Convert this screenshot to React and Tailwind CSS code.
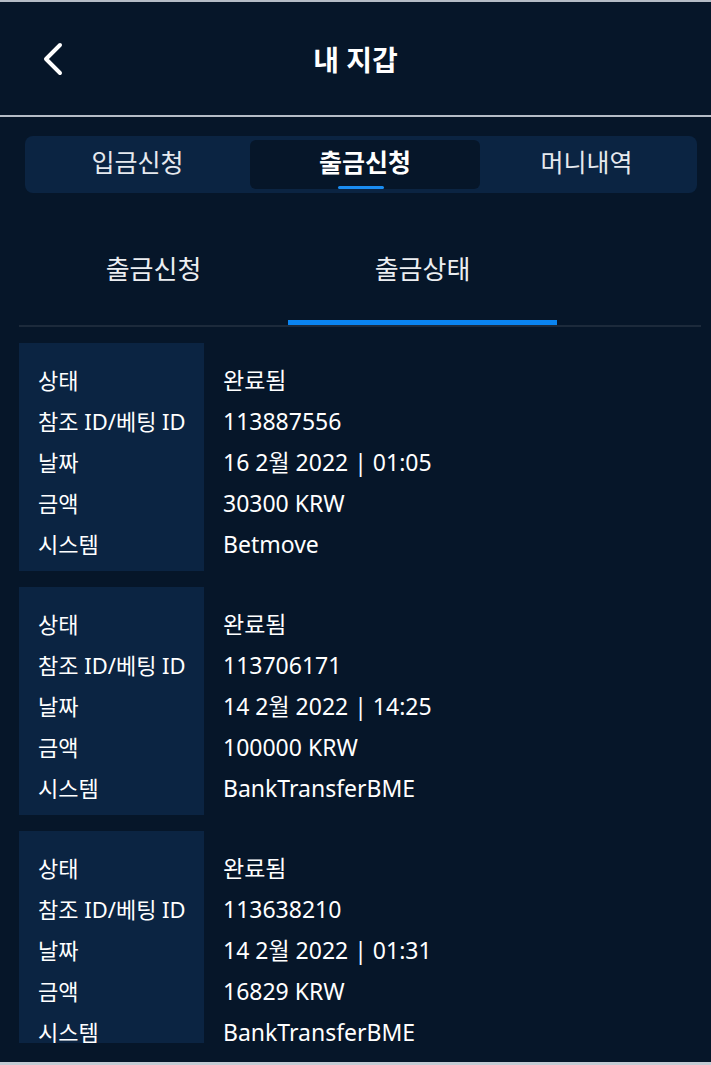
const topTabs = ["입금신청", "출금신청", "머니내역"];

const records = [
    { status: "완료됨", ref: "113887556", date: "16 2월 2022 | 01:05", amount: "30300 KRW", system: "Betmove" },
    { status: "완료됨", ref: "113706171", date: "14 2월 2022 | 14:25", amount: "100000 KRW", system: "BankTransferBME" },
    { status: "완료됨", ref: "113638210", date: "14 2월 2022 | 01:31", amount: "16829 KRW", system: "BankTransferBME" },
];

const labels = ["상태", "참조 ID/베팅 ID", "날짜", "금액", "시스템"];

const RecordCard = ({ r }) => {
    const values = [r.status, r.ref, r.date, r.amount, r.system];
    return (
        <div className="flex shrink-0">
            <div className="w-[185px] bg-[#0b2442] pl-[19px] pt-[17px] pb-[6px] text-[22px]">
                {labels.map((l) => (
                    <div key={l} className="h-[41px] leading-[41px] whitespace-nowrap">
                        {l}
                    </div>
                ))}
            </div>
            <div className="pl-[19px] pt-[17px] pb-[6px] text-[23px]">
                {values.map((v, idx) => (
                    <div key={idx} className="h-[41px] leading-[41px] whitespace-nowrap">
                        {v}
                    </div>
                ))}
            </div>
        </div>
    );
};

export default function App() {
    const activeTop = 1;
    const activeSub = 1;

    return (
        <div
            className="w-[711px] h-[1065px] bg-[#061629] text-white flex flex-col overflow-hidden"
            style={{ fontFamily: '"Noto Sans", "Noto Sans CJK KR", sans-serif' }}
        >
            <div className="h-[2px] bg-[#b4bcc6] shrink-0" />

            {/* header */}
            <div className="h-[113px] shrink-0 grid grid-cols-[1fr_auto_1fr] items-center">
                <div className="pl-[41px] flex items-center">
                    <svg width="24" height="34" viewBox="0 0 24 34" fill="none">
                        <polyline
                            points="19,3 5,17 19,31"
                            stroke="white"
                            strokeWidth="4"
                            strokeLinecap="round"
                            strokeLinejoin="round"
                        />
                    </svg>
                </div>
                <h1 className="text-[28px] font-bold leading-none pt-[2px]">내 지갑</h1>
                <div />
            </div>
            <div className="h-[2px] bg-[#b4bcc6] shrink-0" />

            {/* top segmented tabs */}
            <div className="mt-[19px] ml-[25px] mr-[14px] h-[57px] shrink-0 rounded-[8px] bg-[#0b2442] grid grid-cols-[225px_230px_1fr] py-[4px] pr-[4px]">
                {topTabs.map((t, i) => (
                    <button
                        key={t}
                        className={`relative flex items-center justify-center rounded-[6px] text-[25px] ${
                            activeTop === i ? "bg-[#061629] font-bold text-white" : "text-[#e6e9ee]"
                        }`}
                    >
                        <span className="-mt-[3px]">{t}</span>
                        {activeTop === i && (
                            <span className="absolute bottom-0 left-[88px] w-[46px] h-[3px] rounded-full bg-[#1a8cf0]" />
                        )}
                    </button>
                ))}
            </div>

            {/* sub tabs */}
            <div className="mt-[21px] ml-[19px] mr-[10px] shrink-0 flex border-b-2 border-[#1c2a3b]">
                {["출금신청", "출금상태"].map((t, i) => (
                    <button
                        key={t}
                        className={`w-[269px] h-[111px] flex items-center justify-center text-[26px] text-[#eceef1] pt-[4px] ${
                            activeSub === i ? "border-b-[5px] border-[#0a84f0]" : "border-b-[5px] border-transparent"
                        }`}
                    >
                        {t}
                    </button>
                ))}
            </div>

            {/* records */}
            <div className="flex-1 min-h-0 overflow-hidden mt-[16px] ml-[19px] flex flex-col gap-[16px]">
                {records.map((r) => (
                    <RecordCard key={r.ref} r={r} />
                ))}
            </div>
            <div className="h-[19px] shrink-0" />
            <div className="h-[3px] bg-[#c4ccd4] shrink-0" />
        </div>
    );
}
